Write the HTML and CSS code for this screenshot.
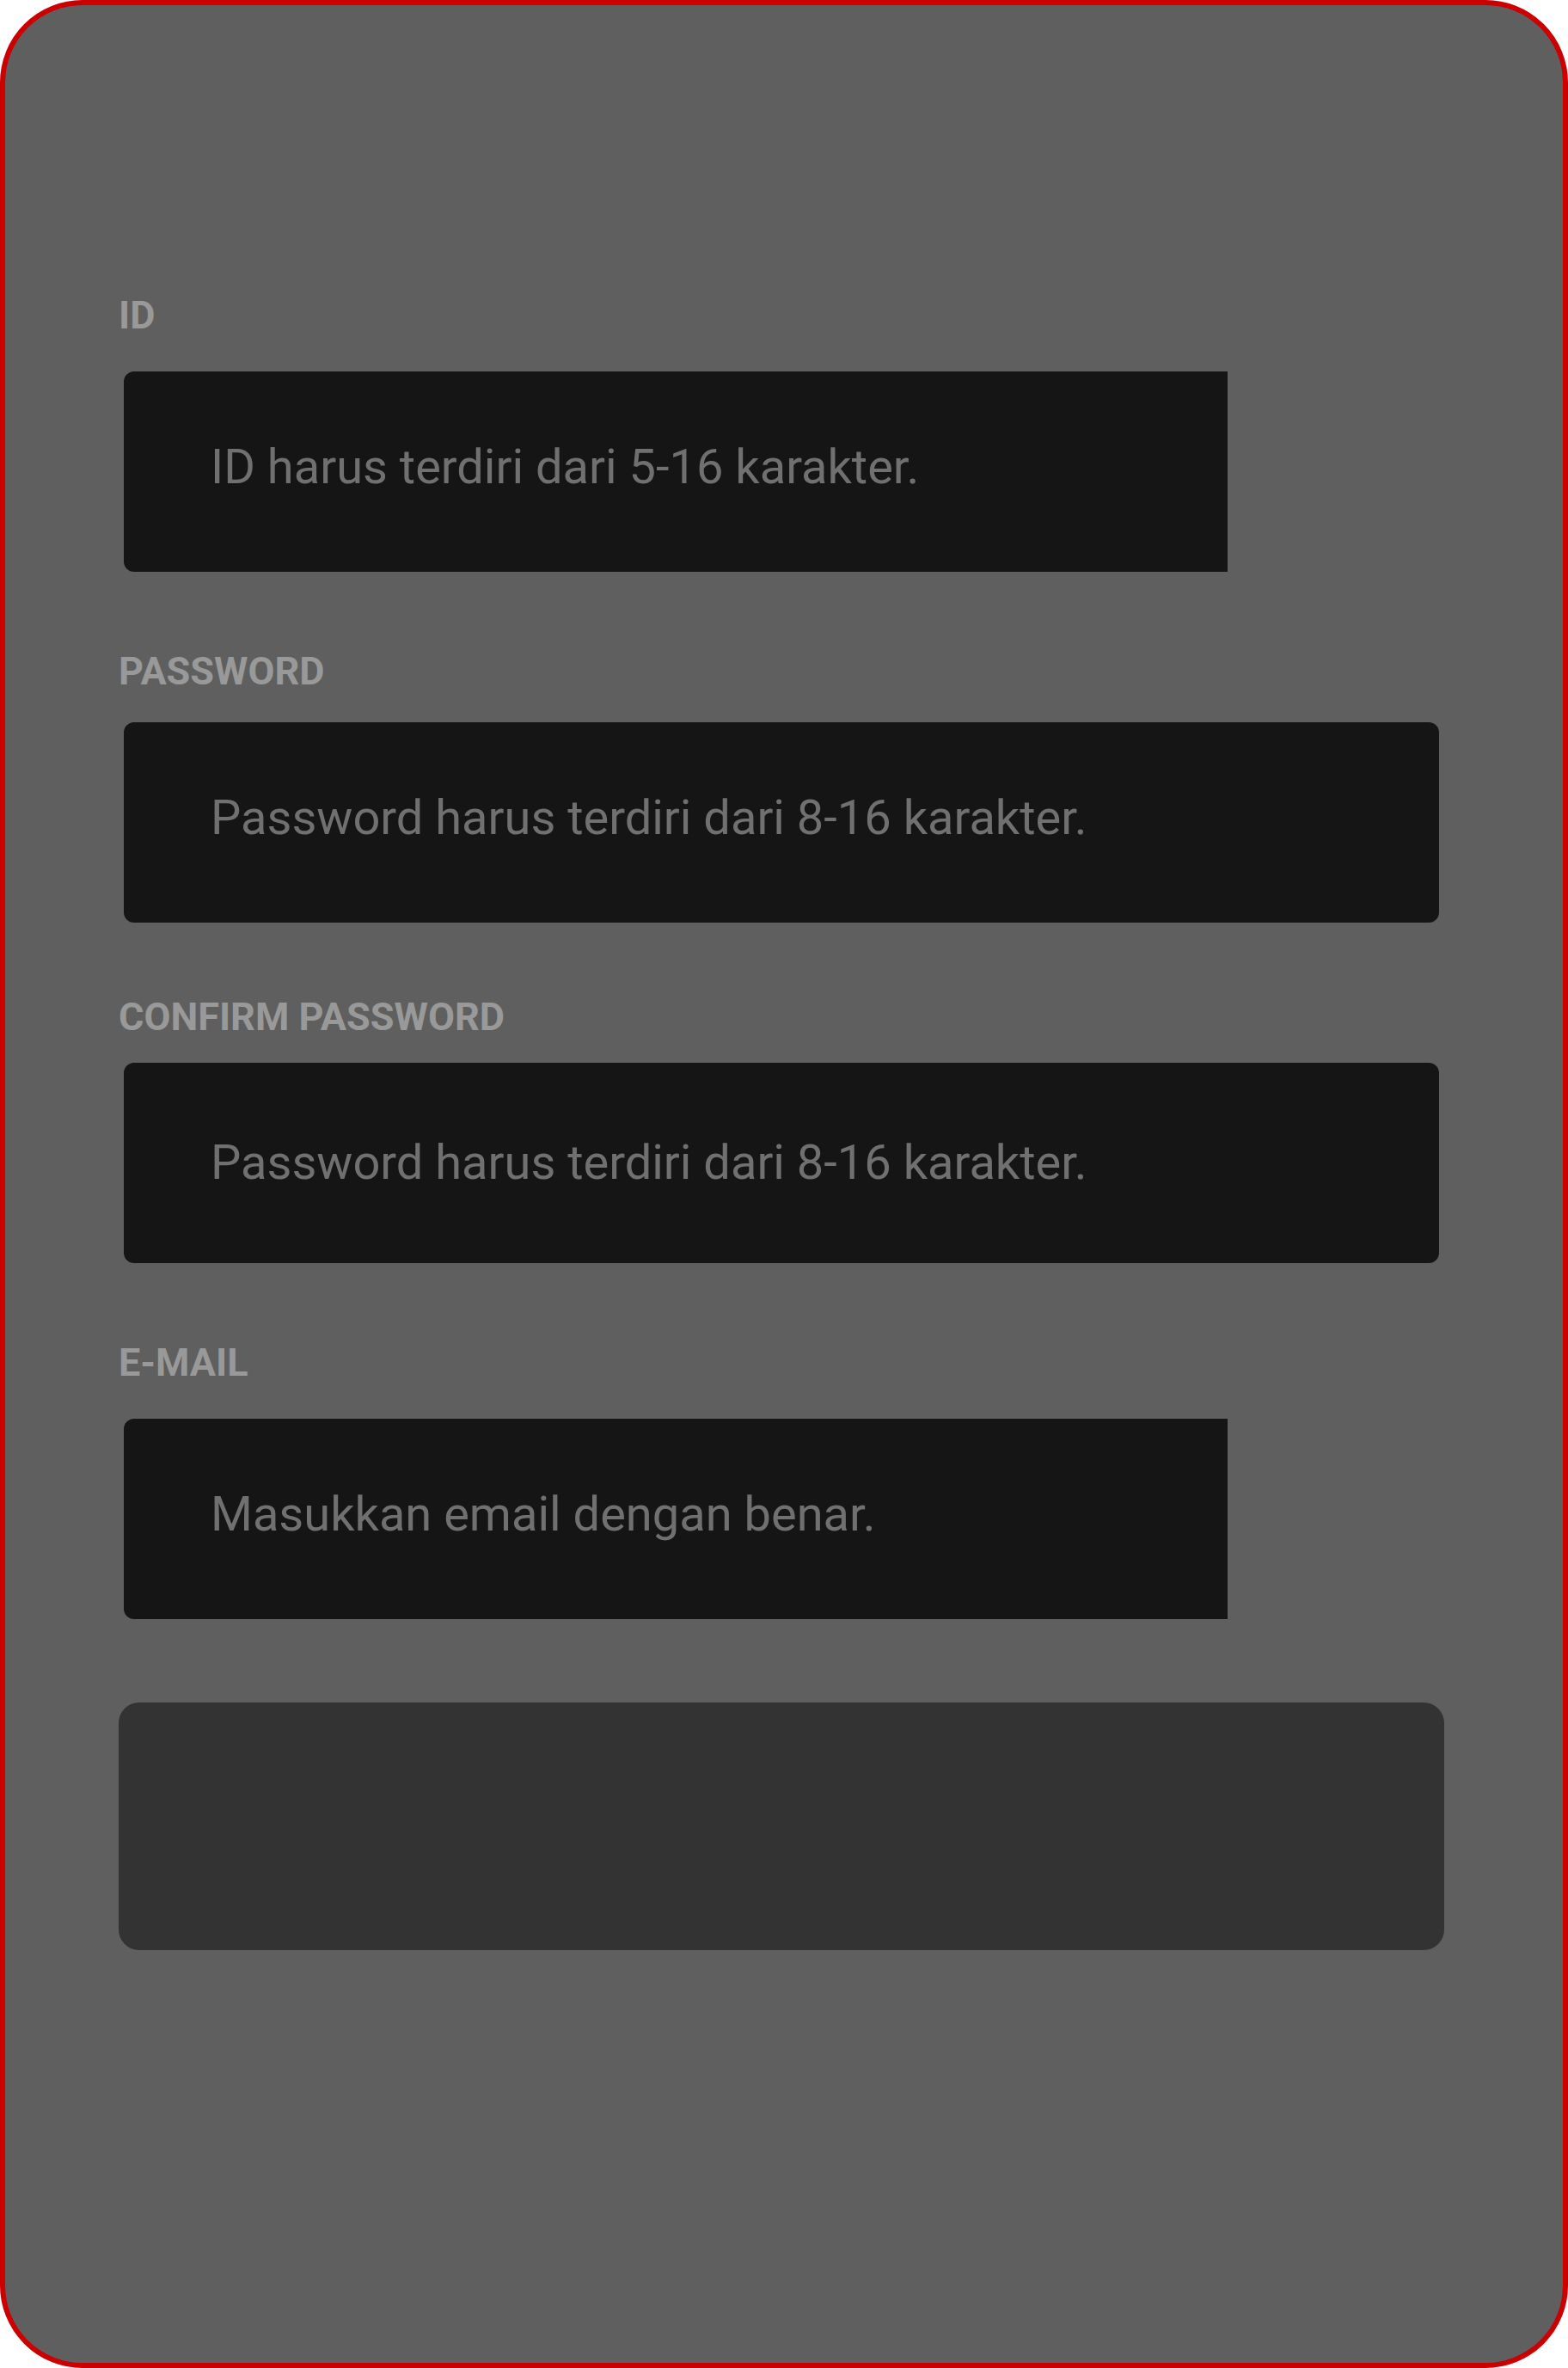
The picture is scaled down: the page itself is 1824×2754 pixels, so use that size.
FILE: index.html
```html
<!DOCTYPE html>
<html lang="id">
<head>
<meta charset="utf-8">
<title>Daftar</title>
<link rel="stylesheet" href="styles.css">
</head>
<body>
<div class="frame">
  <form class="signup">
    <div class="field field--id">
      <label class="field-label">ID</label>
      <div class="field-box field-box--short"><span class="field-hint">ID harus terdiri dari 5-16 karakter.</span></div>
    </div>
    <div class="field field--pw">
      <label class="field-label">PASSWORD</label>
      <div class="field-box"><span class="field-hint">Password harus terdiri dari 8-16 karakter.</span></div>
    </div>
    <div class="field field--confirm">
      <label class="field-label">CONFIRM PASSWORD</label>
      <div class="field-box"><span class="field-hint">Password harus terdiri dari 8-16 karakter.</span></div>
    </div>
    <div class="field field--email">
      <label class="field-label">E-MAIL</label>
      <div class="field-box field-box--short"><span class="field-hint">Masukkan email dengan benar.</span></div>
    </div>
    <button class="submit" type="button"></button>
  </form>
</div>
</body>
</html>
```

FILE: styles.css
```css
html, body {
  margin: 0;
  padding: 0;
  background: #ffffff;
}

.frame {
  width: 1824px;
  height: 2754px;
  box-sizing: border-box;
  border: 6px solid #cc0000;
  border-radius: 96px;
  background: #5f5f5f;
  padding: 335px 138px 0 132px;
  font-family: Roboto, "Noto Sans", sans-serif;
  overflow: hidden;
}

.signup {
  display: flex;
  flex-direction: column;
  margin: 0;
}

.field {
  display: flex;
  flex-direction: column;
}

.field-label {
  display: block;
  font-size: 45px;
  line-height: 52px;
  font-weight: 700;
  color: #999999;
}

.field-box {
  height: 233px;
  margin: 0 6px;
  box-sizing: border-box;
  padding: 78px 0 0 101px;
  background: #151515;
  border-radius: 12px;
}

.field-box--short {
  width: 1284px;
  border-radius: 12px 0 0 12px;
}

.field-hint {
  display: block;
  font-size: 56px;
  line-height: 66px;
  font-weight: 400;
  color: #707070;
  white-space: nowrap;
}

.field--id .field-label { margin-bottom: 39px; }
.field--pw { margin-top: 90px; }
.field--pw .field-label { margin-bottom: 33px; }
.field--confirm { margin-top: 84px; }
.field--confirm .field-label { margin-bottom: 27px; }
.field--confirm .field-box { padding-top: 83px; }
.field--email { margin-top: 90px; }
.field--email .field-label { margin-bottom: 39px; }

.submit {
  display: block;
  margin-top: 97px;
  height: 288px;
  width: 100%;
  border: none;
  padding: 0;
  background: #333333;
  border-radius: 24px;
}
```
